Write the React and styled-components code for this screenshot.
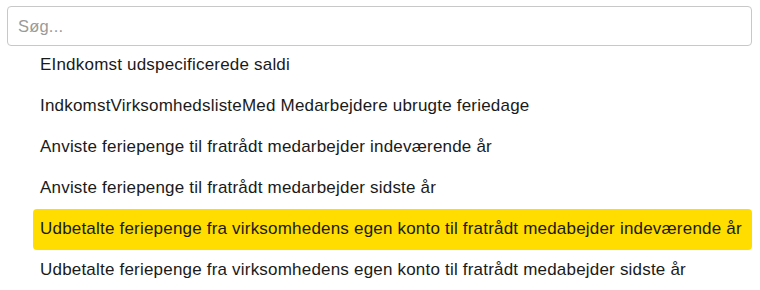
import styled, { createGlobalStyle } from "styled-components";

const GlobalStyle = createGlobalStyle`
  body {
    margin: 0;
    background: #fff;
    font-family: "Liberation Sans", Arial, sans-serif;
  }
`;

const Container = styled.div`
  display: flex;
  flex-direction: column;
  padding: 6px 8px 0 7px;
`;

const SearchInput = styled.input`
  box-sizing: border-box;
  width: 100%;
  height: 40px;
  padding: 0 10px;
  border: 1px solid #c8c8c8;
  border-radius: 4px;
  font-family: inherit;
  font-size: 16.5px;
  letter-spacing: 0.2px;
  color: #222;
  outline: none;
  &::placeholder {
    color: #9a9a9a;
  }
`;

const List = styled.ul`
  list-style: none;
  margin: -1px 0 0 26px;
  padding: 0;
  display: flex;
  flex-direction: column;
`;

const Item = styled.li`
  box-sizing: border-box;
  height: 41px;
  display: flex;
  align-items: center;
  padding: 0 7px 1px;
  border-radius: 4px;
  font-size: 17px;
  letter-spacing: 0.2px;
  color: #1a1a1a;
  white-space: nowrap;
  background: ${(props) => (props.active ? "#ffdd00" : "transparent")};
  cursor: pointer;
`;

const items = [
  "EIndkomst udspecificerede saldi",
  "IndkomstVirksomhedslisteMed Medarbejdere ubrugte feriedage",
  "Anviste feriepenge til fratrådt medarbejder indeværende år",
  "Anviste feriepenge til fratrådt medarbejder sidste år",
  "Udbetalte feriepenge fra virksomhedens egen konto til fratrådt medabejder indeværende år",
  "Udbetalte feriepenge fra virksomhedens egen konto til fratrådt medabejder sidste år",
];

const App = () => {
  return (
    <>
      <GlobalStyle />
      <Container>
        <SearchInput placeholder="Søg..." />
        <List>
          {items.map((text, i) => (
            <Item key={i} active={i === 4}>
              {text}
            </Item>
          ))}
        </List>
      </Container>
    </>
  );
};

export default App;
